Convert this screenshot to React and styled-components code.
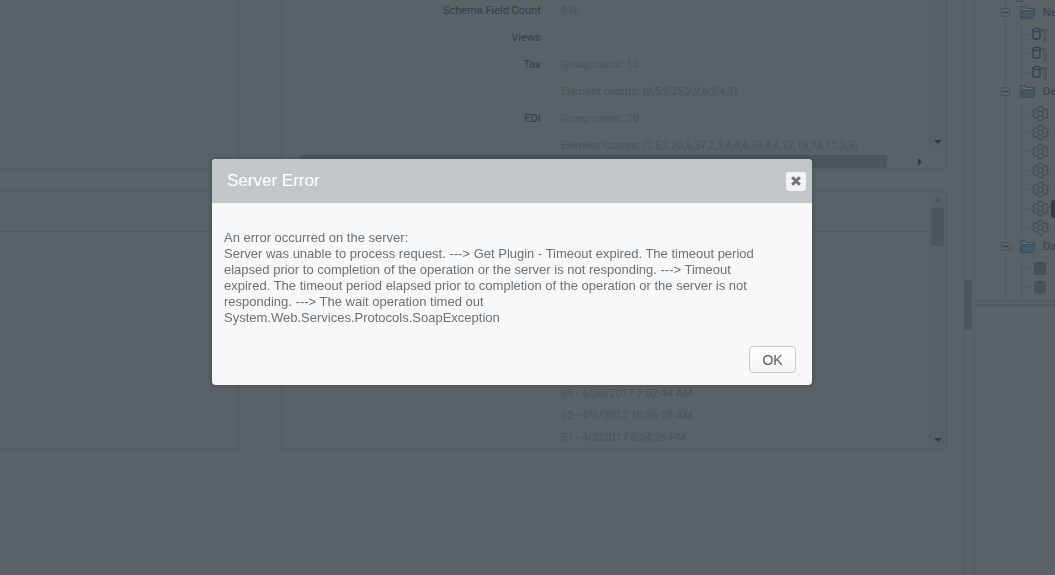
import React, { useState } from 'react';
import styled, { createGlobalStyle, ThemeProvider } from 'styled-components';

const theme = {
  colors: {
    page: '#586267',
    line: '#505a60',
    lineSoft: '#505b61',
    thumb: '#4d565c',
    track: '#566066',
    label: '#353e46',
    value: '#4a545b',
    header: '#c1c6c9',
    dialog: '#f8f8f9',
    text: '#6a7075',
  },
};

const schemaRows = [
  { label: 'Schema Field Count', value: '916' },
  { label: 'Views', value: '' },
  { label: 'Tax', value: 'Group count: 10' },
  { label: '', value: 'Element counts: (2,5,2,25,2,2,6,2,4,3)' },
  { label: 'EDI', value: 'Group count: 20' },
  { label: '', value: 'Element counts: (2,5,2,20,6,37,2,3,4,4,4,39,4,4,12,16,18,12,2,5)' },
];

const versions = [
  '69 - 4/20/2017 7:02:44 AM',
  '62 - 4/6/2017 10:36:18 AM',
  '57 - 4/2/2017 6:04:26 PM',
];

const tree = [
  { name: 'Ne', icon: 'link', count: 3 },
  { name: 'De', icon: 'gear', count: 7 },
  { name: 'Da', icon: 'data', count: 2, blue: true },
];

const FolderIcon = ({ blue }) => (
  <svg width="17" height="15" viewBox="0 0 17 15" fill="none" stroke="#3f4c54">
    <path d="M1.500 13.500v-12h5l1 2h7.500v2" />
    <path d="M1.500 13.500 3.500 5.500h12.500l-1.500 8z" stroke="#3c5058" fill={blue ? '#405a6e' : '#41595f'} />
    <path d="M4.500 4.500h9" stroke="#65727a" />
  </svg>
);

const LinkIcon = () => (
  <svg width="16" height="15" viewBox="0 0 16 15" fill="none" stroke="#38434b">
    <path d="M1 3v7.500c0 2.300 7 2.300 7 0V3" strokeWidth="1.500" />
    <ellipse cx="4.500" cy="3" rx="3.500" ry="1.600" strokeWidth="1.300" />
    <path d="M8 3.500h2l2-1" />
    <circle cx="13" cy="4" r="1.600" stroke="#45515a" />
    <circle cx="13" cy="8.500" r="1.600" stroke="#45515a" />
    <circle cx="13" cy="13" r="1.600" stroke="#45515a" />
  </svg>
);

const GearIcon = () => (
  <svg width="17" height="17" viewBox="0 0 24 24" fill="none" stroke="#434e56" strokeWidth="1.700" strokeLinejoin="round">
    <path d="M9.500 2h5l.7 3.200 2 1.200 3.100-1 2.500 4.300-2.400 2.100v.4l2.400 2.100-2.500 4.300-3.100-1-2 1.200-.7 3.200h-5l-.7-3.200-2-1.200-3.100 1-2.500-4.300 2.400-2.100v-.4L1.200 9.700l2.500-4.300 3.100 1 2-1.200z" />
    <circle cx="12" cy="12" r="3.800" />
  </svg>
);

const DataIcon = () => (
  <svg width="14" height="15" viewBox="0 0 14 15">
    <path d="M1 3c0-3 12-3 12 0v9c0 3-12 3-12 0z" fill="#454f56" />
    <path d="M1 3.500c0 2 12 2 12 0M1 7c0 2 12 2 12 0M1 10.500c0 2 12 2 12 0" fill="none" stroke="#4e585f" />
  </svg>
);

const CrossIcon = () => (
  <svg width="10" height="10" viewBox="0 0 10 10" stroke="#707476" strokeWidth="3">
    <path d="M1.200 1.200l7.600 7.600M8.800 1.200 1.200 8.800" />
  </svg>
);

const icons = { link: LinkIcon, gear: GearIcon, data: DataIcon };

const Arrow = ({ dir = 'down', faint }) => {
  const turn = { down: 0, up: 180, right: -90 }[dir];
  return (
    <svg width="8" height="8" viewBox="0 0 8 8">
      <path d="M0 2h8L4 6z" fill={faint ? '#48525a' : '#343d44'} transform={`rotate(${turn} 4 4)`} />
    </svg>
  );
};

const App = () => {
  const [open, setOpen] = useState(true);

  return (
    <ThemeProvider theme={theme}>
      <GlobalStyle />
      <Page>
        <Main>
          <SideColumn>
            <Panel $size="top" $flush />
            <Panel $flush>
              <PanelHeader />
            </Panel>
          </SideColumn>
          <Column>
            <Panel $size="top">
              <PanelBody>
                <Rows>
                  {schemaRows.map((row, i) => (
                    <Row key={i}>
                      <dt>{row.label}</dt>
                      <dd>{row.value}</dd>
                    </Row>
                  ))}
                </Rows>
                <ScrollTrack $end>
                  <Arrow />
                </ScrollTrack>
              </PanelBody>
              <BottomTrack>
                <BottomThumb />
                <Arrow dir="right" />
              </BottomTrack>
            </Panel>
            <Panel>
              <PanelBody>
                <Content>
                  <PanelHeader />
                  <Versions>
                    {versions.map((v) => (
                      <li key={v}>{v}</li>
                    ))}
                  </Versions>
                </Content>
                <ScrollTrack>
                  <Arrow dir="up" faint />
                  <Thumb />
                  <Spacer />
                  <Arrow />
                </ScrollTrack>
              </PanelBody>
            </Panel>
          </Column>
        </Main>
        <Splitter>
          <Grip />
        </Splitter>
        <Sidebar>
          <Tree>
            <ClippedItem />
            {tree.map((folder) => {
              const Icon = icons[folder.icon];
              return (
                <li key={folder.name}>
                  <FolderRow>
                    <Toggle type="button" aria-label={folder.name} />
                    <Stub />
                    <FolderIcon blue={folder.blue} />
                    <span>{folder.name}</span>
                  </FolderRow>
                  <Children>
                    {Array.from({ length: folder.count }, (_, i) => (
                      <Leaf key={i}>
                        <Stub $wide />
                        <LeafIcon>
                          <Icon />
                        </LeafIcon>
                        {folder.icon === 'gear' && i === 5 && <Marker />}
                      </Leaf>
                    ))}
                  </Children>
                </li>
              );
            })}
          </Tree>
        </Sidebar>
      </Page>
      {open && (
        <Overlay>
          <Dialog role="dialog" aria-modal="true" aria-labelledby="dialog-title">
            <DialogHeader>
              <h1 id="dialog-title">Server Error</h1>
              <CloseButton type="button" aria-label="Close" onClick={() => setOpen(false)}>
                <CrossIcon />
              </CloseButton>
            </DialogHeader>
            <Message>
              An error occurred on the server:
              <br />
              Server was unable to process request. ---&gt; Get Plugin - Timeout expired. The timeout period
              elapsed prior to completion of the operation or the server is not responding. ---&gt; Timeout
              expired. The timeout period elapsed prior to completion of the operation or the server is not
              responding. ---&gt; The wait operation timed out
              <br />
              System.Web.Services.Protocols.SoapException
            </Message>
            <DialogFooter>
              <OkButton type="button" onClick={() => setOpen(false)}>OK</OkButton>
            </DialogFooter>
          </Dialog>
        </Overlay>
      )}
    </ThemeProvider>
  );
};

export default App;

const GlobalStyle = createGlobalStyle`
  * {
    box-sizing: border-box;
  }

  body {
    margin: 0;
    overflow: hidden;
    background: ${theme.colors.page};
    font-family: "Liberation Sans", Arial, sans-serif;
    font-size: 11px;
  }

  ul, dl, dd, h1, p {
    margin: 0;
    padding: 0;
    list-style: none;
  }

  svg {
    display: block;
    flex: none;
  }
`;

const Page = styled.div`
  display: flex;
  min-height: 100vh;
  font-family: Roboto, sans-serif;
`;

const Main = styled.main`
  flex: 1;
  display: flex;
  gap: 42px;
  padding-right: 17px;
`;

const Column = styled.div`
  flex: 1;
  display: flex;
  flex-direction: column;
  gap: 20px;
  min-width: 0;
`;

const SideColumn = styled(Column)`
  flex: 0 0 239px;
`;

const Panel = styled.section`
  display: flex;
  flex-direction: column;
  height: ${({ $size }) => ($size === 'top' ? 170 : 260)}px;
  border: 1px solid ${({ theme }) => theme.colors.line};
  border-top-width: ${({ $size }) => ($size === 'top' ? 0 : 1)}px;
  border-left-width: ${({ $flush }) => ($flush ? 0 : 1)}px;
`;

const PanelHeader = styled.header`
  height: 41px;
  border-bottom: 1px solid ${({ theme }) => theme.colors.line};
`;

const PanelBody = styled.div`
  flex: 1;
  display: flex;
  min-height: 0;
`;

const Content = styled.div`
  flex: 1;
  display: flex;
  flex-direction: column;
  justify-content: space-between;
`;

const Rows = styled.dl`
  flex: 1;
  overflow: hidden;
  padding-top: 4px;
`;

const Row = styled.div`
  display: flex;
  gap: 20px;
  height: 27px;
  line-height: 13px;

  dt {
    width: 40%;
    text-align: right;
    color: ${({ theme }) => theme.colors.label};
  }

  dd {
    color: ${({ theme }) => theme.colors.value};
    white-space: nowrap;
  }
`;

const Versions = styled.ul`
  padding-left: calc(40% + 20px);
  color: ${({ theme }) => theme.colors.value};
  line-height: 22px;
`;

const ScrollTrack = styled.div`
  display: flex;
  flex-direction: column;
  align-items: center;
  justify-content: ${({ $end }) => ($end ? 'flex-end' : 'flex-start')};
  width: 17px;
  padding: ${({ $end }) => ($end ? '5px 0 8px' : '5px 0')};
  background: ${({ theme }) => theme.colors.track};
`;

const Thumb = styled.div`
  width: 13px;
  height: 38px;
  margin-top: 4px;
  background: ${({ theme }) => theme.colors.thumb};
`;

const Spacer = styled.div`
  flex: 1;
`;

const BottomTrack = styled.div`
  display: flex;
  align-items: center;
  justify-content: space-between;
  height: 15px;
  padding: 0 22px 0 18px;
`;

const BottomThumb = styled.div`
  width: 94%;
  height: 13px;
  background: ${({ theme }) => theme.colors.thumb};
`;

const Splitter = styled.div`
  display: flex;
  align-items: center;
  width: 11px;
  padding-top: 34px;
  border-left: 1px solid ${({ theme }) => theme.colors.line};
  border-right: 1px solid ${({ theme }) => theme.colors.line};
`;

const Grip = styled.div`
  width: 7px;
  height: 50px;
  background: ${({ theme }) => theme.colors.thumb};
`;

const Sidebar = styled.aside`
  width: 80px;
  overflow: hidden;
`;

const Tree = styled.ul`
  height: 306px;
  padding-left: 26px;
  border-bottom: 6px double ${({ theme }) => theme.colors.lineSoft};
  background: linear-gradient(${({ theme }) => theme.colors.lineSoft}, ${({ theme }) => theme.colors.lineSoft}) 30px 0 / 1px 100% no-repeat;
`;

const ClippedItem = styled.li`
  width: 7px;
  height: 2px;
  margin: 0 0 1px 15px;
  border: 1px solid #434e56;
  border-top: 0;
`;

const FolderRow = styled.div`
  display: flex;
  align-items: center;
  height: 19px;
  margin-bottom: 3px;
  color: #36414a;

  svg {
    margin: 0 7px 0 4px;
  }
`;

const Toggle = styled.button`
  display: flex;
  align-items: center;
  justify-content: center;
  flex: none;
  width: 9px;
  height: 9px;
  padding: 0;
  border: 1px solid #48545b;
  background: ${({ theme }) => theme.colors.page};

  &::before {
    content: '';
    width: 5px;
    height: 1px;
    background: #303a42;
  }
`;

const Stub = styled.span`
  flex: none;
  width: ${({ $wide }) => ($wide ? 8 : 5)}px;
  height: 1px;
  background: ${({ theme }) => theme.colors.lineSoft};
`;

const Children = styled.ul`
  margin-left: 20px;
`;

const Leaf = styled.li`
  position: relative;
  display: flex;
  align-items: center;
  height: 19px;
  border-left: 1px solid ${({ theme }) => theme.colors.lineSoft};
`;

const LeafIcon = styled.span`
  display: flex;
  justify-content: center;
  width: 20px;
`;

const Marker = styled.span`
  position: absolute;
  right: 0;
  width: 4px;
  height: 18px;
  border-radius: 3px 0 0 3px;
  background: #343c42;
`;

const Overlay = styled.div`
  position: fixed;
  inset: 0;
  display: flex;
  align-items: center;
  justify-content: center;
  padding: 0 31px 31px 0;
`;

const Dialog = styled.div`
  width: 600px;
  max-width: 100%;
  border-radius: 4px;
  overflow: hidden;
  background: ${({ theme }) => theme.colors.dialog};
  box-shadow: 0 0 6px rgba(0, 0, 0, 0.2);
`;

const DialogHeader = styled.header`
  display: flex;
  align-items: center;
  justify-content: space-between;
  height: 44px;
  padding: 0 6px 0 15px;
  background: ${({ theme }) => theme.colors.header};

  h1 {
    color: white;
    font-size: 17px;
    font-weight: normal;
  }
`;

const CloseButton = styled.button`
  display: flex;
  align-items: center;
  justify-content: center;
  width: 20px;
  height: 19px;
  padding: 0;
  border: 0;
  border-radius: 3px;
  background: #f1f2f3;
  cursor: pointer;
`;

const Message = styled.p`
  padding: 27px 40px 0 12px;
  color: ${({ theme }) => theme.colors.text};
  font-size: 13px;
  line-height: 16px;
`;

const DialogFooter = styled.footer`
  display: flex;
  justify-content: flex-end;
  padding: 20px 16px 12px;
`;

const OkButton = styled.button`
  width: 47px;
  height: 27px;
  padding: 0;
  border: 1px solid #c8c9ca;
  border-radius: 4px;
  background: linear-gradient(#ffffff, #f5f5f5);
  color: #55595c;
  font-family: inherit;
  font-size: 14px;
  cursor: pointer;
`;
